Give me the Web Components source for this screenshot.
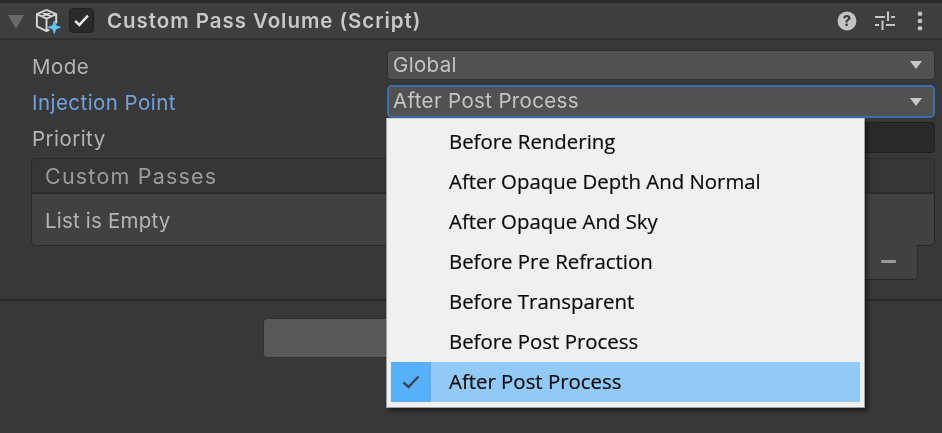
<!DOCTYPE html>
<html><head><meta charset="utf-8">
<style>
html,body{margin:0;padding:0;background:#383838;width:942px;height:433px;overflow:hidden}
body{font-family:Inter,"Liberation Sans",sans-serif;position:relative;filter:blur(.45px)}
</style></head>
<body>
<x-inspector>
  <x-header title-text="Custom Pass Volume (Script)"></x-header>
  <x-row label="Mode" style="height:30px;margin-top:10px"><x-drop value="Global"></x-drop></x-row>
  <x-row label="Injection Point" active style="height:33px;margin-top:5px"><x-drop value="After Post Process" focus></x-drop></x-row>
  <x-row label="Priority" style="height:31px;margin-top:4px"><x-field></x-field></x-row>
  <x-list heading="Custom Passes" empty="List is Empty"></x-list>
  <x-add-button></x-add-button>
</x-inspector>
<x-menu>
  <x-item>Before Rendering</x-item>
  <x-item>After Opaque Depth And Normal</x-item>
  <x-item>After Opaque And Sky</x-item>
  <x-item>Before Pre Refraction</x-item>
  <x-item>Before Transparent</x-item>
  <x-item>Before Post Process</x-item>
  <x-item selected>After Post Process</x-item>
</x-menu>
<script>
function def(name, css, html){
  customElements.define(name, class extends HTMLElement{
    connectedCallback(){
      if(this.shadowRoot) return;
      const r=this.attachShadow({mode:'open'});
      r.innerHTML='<style>'+css+'</style>'+(typeof html==='function'?html(this):html);
    }
  });
}
def('x-inspector',':host{display:block;width:942px}','<slot></slot>');
def('x-header',`
:host{display:flex;align-items:center;height:35px;margin-top:3px;background:#3e3e3e;box-shadow:0 -3px 0 #2b2b2b;border-bottom:2px solid #303030;color:#c8c8c8;padding-left:8px}
.tri{width:0;height:0;border-left:8px solid transparent;border-right:8px solid transparent;border-top:14px solid #6a6a6a;margin-top:2px}
.cube{margin-left:10px;display:block}
.chk{margin-left:8px;width:25px;height:25px;box-sizing:border-box;border-radius:4px;background:#2a2a2a;border:1px solid #212121;display:flex;align-items:center;justify-content:center}
.t{margin-left:13px;font-weight:600;font-size:20.5px;letter-spacing:.95px;white-space:nowrap;flex:1}
.ic{display:flex;align-items:center;gap:18px;padding-right:19px}
`,h=>`<div class="tri"></div>
<svg class="cube" width="27" height="27" viewBox="0 0 28 28" fill="none" stroke="#d4d4d4" stroke-width="2" stroke-linejoin="round"><path d="M13 3 23 7.5V17M13 3 3 7.5V20L13 25 16 23.5M3 7.5 13 12 23 7.5M13 12V25M8 5.2 18 10M18 5.2 8 10"/><path d="M21 14.5 22.7 19.3 27.5 21 22.7 22.7 21 27.5 19.3 22.7 14.5 21 19.3 19.3Z" fill="#5cc6f5" stroke="#5cc6f5" stroke-width=".8"/></svg>
<div class="chk"><svg width="17" height="15" viewBox="0 0 16 14" fill="none" stroke="#e4e4e4" stroke-width="2.4"><path d="M2 7.5 6 11.2 14 2.5"/></svg></div>
<div class="t">${h.getAttribute('title-text')}</div>
<div class="ic">
<svg width="20" height="20" viewBox="0 0 20 20"><circle cx="10" cy="10" r="9.4" fill="#c4c4c4"/><text x="10" y="15" text-anchor="middle" font-family="Inter,Liberation Sans,sans-serif" font-size="14.5" font-weight="800" fill="#3e3e3e">?</text></svg>
<svg width="20" height="20" viewBox="0 0 20 20" fill="none" stroke="#c4c4c4" stroke-width="2.1" style="margin-right:4px"><path d="M0 6H10M16 6H20M13 0.5V10M0 14H4M11 14H20M7.5 9.5V19"/></svg>
<svg width="6" height="20" viewBox="0 0 6 20" fill="#c4c4c4"><circle cx="3" cy="2.8" r="2.3"/><circle cx="3" cy="10" r="2.3"/><circle cx="3" cy="17.2" r="2.3"/></svg>
</div>`);
def('x-row',`
:host{display:flex;align-items:center;padding:0 7px 0 32px;color:#b4b4b4;font-size:20.5px;letter-spacing:.45px}
:host([active]){color:#6fa3e0}
.l{width:355px;flex:none;white-space:nowrap;position:relative;top:1px}
.c{flex:1;height:100%;min-width:0}
`,h=>`<div class="l">${h.getAttribute('label')}</div><div class="c"><slot></slot></div>`);
def('x-drop',`
:host{display:flex;align-items:center;height:100%;box-sizing:border-box;background:#515151;border:1px solid #303030;border-radius:4px;color:#c4c4c4;font-size:20.5px;letter-spacing:.35px;padding:0 12px 0 5px}
:host([focus]){border:2px solid #3d6ea8;padding-left:4px;padding-right:11px;border-radius:5px}
.v{flex:1;white-space:nowrap;position:relative;top:-1px}
.a{width:0;height:0;border-left:6.5px solid transparent;border-right:6.5px solid transparent;border-top:8px solid #c8c8c8}
`,h=>`<div class="v">${h.getAttribute('value')}</div><div class="a"></div>`);
def('x-field',':host{display:block;height:100%;box-sizing:border-box;background:#2a2a2a;border:1px solid #212121;border-radius:4px}','');
def('x-list',`
:host{display:block;margin:5px 7px 0 31px;color:#a8a8a8}
.b{border:1px solid #2a2a2a;border-radius:5px;overflow:hidden;height:88px;box-sizing:border-box;background:#414141;display:flex;flex-direction:column}
.h{height:33px;flex:none;background:#363636;border-bottom:2px solid #2c2c2c;padding-left:13px;display:flex;align-items:center;font-size:21.5px;letter-spacing:1.2px;color:#9c9c9c}
.e{flex:1;padding-left:13px;display:flex;align-items:center;font-size:20.5px;letter-spacing:.2px;color:#b4b4b4;padding-top:2px}
.f{margin-left:auto;margin-right:17px;margin-top:-1px;width:200px;height:35px;box-sizing:border-box;background:#414141;border:1px solid #2a2a2a;border-top:0;border-radius:0 0 5px 5px;display:flex;align-items:center;justify-content:flex-end;padding-right:21px;padding-bottom:2px}
.m{width:15px;height:3px;border-radius:1px;background:#999}
`,h=>`<div class="b"><div class="h">${h.getAttribute('heading')}</div><div class="e">${h.getAttribute('empty')}</div></div><div class="f"><div class="m"></div></div>`);
def('x-add-button',`
:host{display:block;margin-top:19px;border-top:2px solid #272727;padding-top:17px}
.b{display:block;margin-left:263px;width:414px;height:40px;box-sizing:border-box;background:#585858;border:1px solid #303030;border-radius:4px}
`,'<div class="b"></div>');
def('x-menu',`
:host{position:absolute;left:386px;top:118px;width:479px;height:290px;box-sizing:border-box;background:#f0f0f0;border:1px solid #a0a0a0;border-top-color:#d0d0d0;padding:3px 4px 4px 4px;box-shadow:3px 3px 4px rgba(0,0,0,.45);font-family:"Open Sans","Noto Sans",sans-serif;color:#000}
`,'<slot></slot>');
def('x-item',`
:host{display:flex;align-items:center;height:40px;font-size:20.4px;color:#0a0a0a;white-space:nowrap;-webkit-text-stroke:.2px #0a0a0a}
.g{width:40px;height:100%;flex:none;display:flex;align-items:center;justify-content:center;margin-right:18px}
.s{position:relative;top:-1px}
:host([selected]){background:#91c9f7}
:host([selected]) .g{background:#56b0fa}
`,h=>`<div class="g">${h.hasAttribute('selected')?'<svg width="18" height="14" viewBox="0 0 18 14" fill="none" stroke="#3a4650" stroke-width="2.4"><path d="M1.5 7.5 6.5 12 16.5 1.5"/></svg>':''}</div><div class="s"><slot></slot></div>`);
</script>
</body></html>
